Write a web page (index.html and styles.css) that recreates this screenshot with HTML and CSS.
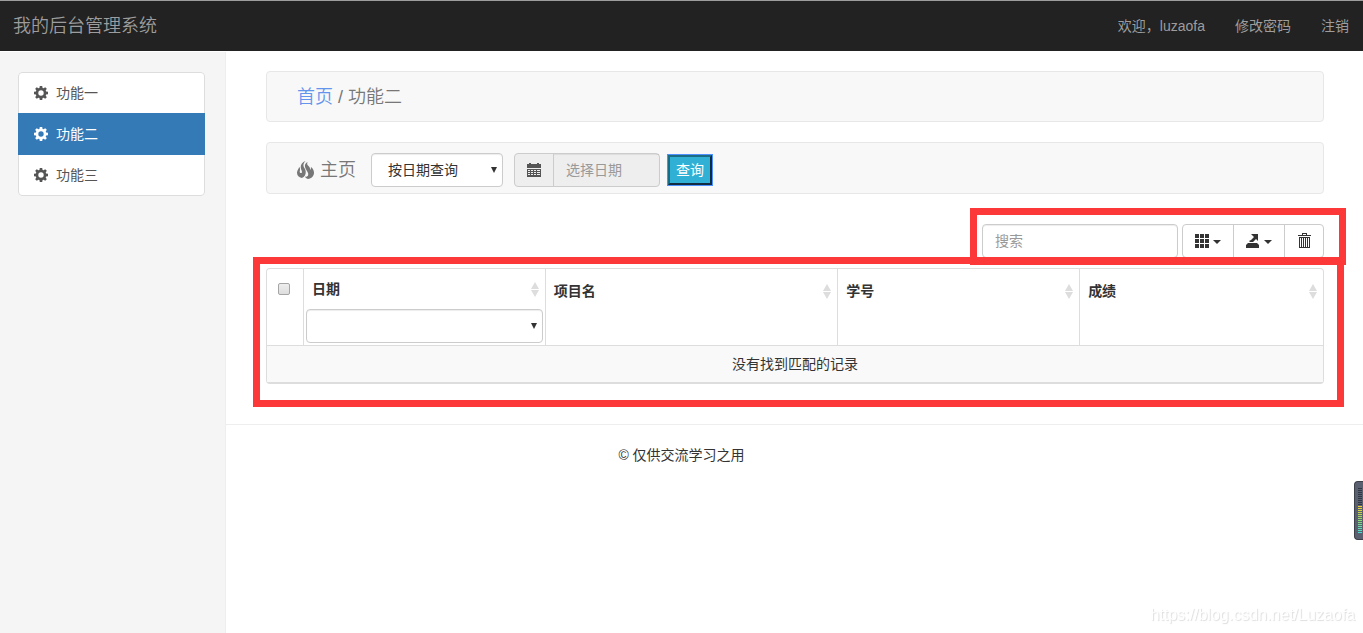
FILE: index.html
```html
<!DOCTYPE html>
<html lang="zh-CN">
<head>
<meta charset="utf-8">
<title>我的后台管理系统</title>
<link rel="stylesheet" href="styles.css">
</head>
<body>
<svg class="sprite" aria-hidden="true">
  <symbol id="cog" viewBox="0 0 14 14">
    <path fill-rule="evenodd" d="M5.8 0h2.4l.4 1.9 1 .4L11.2 1.200 12.800 2.800 11.700 4.400l.4 1 1.900.4v2.400l-1.900.4-.4 1 1.100 1.600-1.600 1.600-1.600-1.100-1 .4L8.200 14H5.800l-.4-1.900-1-.4-1.600 1.100-1.600-1.600 1.100-1.600-.4-1L0 8.200V5.800l1.900-.4.4-1L1.200 2.800 2.800 1.200l1.600 1.100 1-.4zM7 4.300a2.700 2.700 0 1 0 0 5.400 2.700 2.700 0 0 0 0-5.400z"/>
  </symbol>
  <symbol id="sorter" viewBox="0 0 8 15">
    <path d="M4 0l4 7H0zM0 8h8l-4 7z"/>
  </symbol>
</svg>
<header class="navbar">
  <a class="brand" href="#">我的后台管理系统</a>
  <nav class="nav-links">
    <a href="#">欢迎，luzaofa</a>
    <a href="#">修改密码</a>
    <a href="#">注销</a>
  </nav>
</header>
<div class="layout">
  <aside class="sidebar">
    <nav class="menu">
      <a class="menu-item" href="#"><svg class="icon"><use href="#cog"/></svg>功能一</a>
      <a class="menu-item active" href="#"><svg class="icon"><use href="#cog"/></svg>功能二</a>
      <a class="menu-item" href="#"><svg class="icon"><use href="#cog"/></svg>功能三</a>
    </nav>
  </aside>
  <div class="page">
    <main class="content">
      <div class="panel breadcrumb"><a href="#">首页</a>&nbsp;/&nbsp;<span>功能二</span></div>
      <form class="panel filters">
        <h1 class="filters-title">
          <svg class="icon-flame" viewBox="0 0 17 18" aria-hidden="true">
            <path d="M8.500 0C6.800 1.600 6.200 3.200 6.500 5c.3 1.700 1.900 2.700 2.200 5.200.3 3-1 5.800-3.900 6.800C2 16.600 0 14.600 0 11.800 0 9.400 1.600 8 2.200 6c.7.8 1 1.700.8 2.900-.2 1.200-.5 2 .1 2.800.5.600 1.500.5 1.800-.3.400-1.200-.9-2.400-1.100-4.600C3.500 3.600 5.500 1 8.500 0z"/>
            <path d="M10.600 1c-.8 1.400-.5 2.700.7 3.700 1.400 1.200 2 2.500 1.800 4.200.8-.8 1-1.800.8-3 1.900 1.200 3.100 3.300 3.100 5.800 0 3.300-2.500 5.900-6 6.300-1.700-.3-2.700-1.200-3-2.400 1.400.3 2.600-.2 3.100-1.400.8-2-1-3.500-1.900-5.400C8.100 6.500 7.700 5.300 8 4c.4-1.500 1.300-2.400 2.600-3z"/>
          </svg>主页
        </h1>
        <span class="select-box query-type">
          <select class="control" aria-label="查询方式"><option>按日期查询</option></select>
        </span>
        <div class="date-group">
          <label class="addon" for="date" aria-label="日期">
            <svg class="icon" viewBox="0 0 14 14"><path fill-rule="evenodd" d="M0 1h2V0h2v1h6V0h2v1h2v4H0zM0 6h14v8H0zM1 7v1h2V7zm3 0v1h2V7zm3 0v1h2V7zm3 0v1h3V7zM1 9v1h2V9zm3 0v1h2V9zm3 0v1h2V9zm3 0v1h3V9zM1 11v1h2v-1zm3 0v1h2v-1zm3 0v1h2v-1zm3 0v1h3v-1z"/></svg>
          </label>
          <input class="date-input" id="date" type="text" placeholder="选择日期" readonly>
        </div>
        <button class="query-button" type="button">查询</button>
      </form>
      <div class="toolbar">
        <div class="tools">
          <input class="control search" type="text" placeholder="搜索" aria-label="搜索">
          <div class="button-group">
            <button type="button" aria-label="列">
              <svg class="icon" viewBox="0 0 14 14"><path d="M0 0h4v4H0zm5 0h4v4H5zm5 0h4v4h-4zM0 5h4v4H0zm5 0h4v4H5zm5 0h4v4h-4zM0 10h4v4H0zm5 0h4v4H5zm5 0h4v4h-4z"/></svg>
              <span class="caret"></span>
            </button>
            <button type="button" aria-label="导出">
              <svg class="icon" viewBox="0 0 14 14"><path d="M5 0h7v7L10 5 7 8H4L3 7l2-1 3-3zM2 9h9l2 2H0zM0 11h13v3H0z"/></svg>
              <span class="caret"></span>
            </button>
            <button type="button" aria-label="删除">
              <svg class="icon-trash" viewBox="0 0 13 16"><path fill-rule="evenodd" d="M4 0h5v2h4v1H0V2h4zm1 1v1h3V1zM1 4h11v11H1zm1 1v9h1V5zm2 0v9h1V5zm2 0v9h1V5zm2 0v9h1V5zm2 0v9h1V5z"/></svg>
            </button>
          </div>
          <div class="highlight"></div>
        </div>
      </div>
      <div class="table-box">
        <table class="records">
          <colgroup><col class="col-check"><col class="col-date"><col class="col-project"><col class="col-number"><col class="col-score"></colgroup>
          <thead>
            <tr>
              <th class="check-cell"><input class="check" type="checkbox" aria-label="全选"></th>
              <th>
                <div class="th-label th-filtered">日期<svg class="sorter"><use href="#sorter"/></svg></div>
                <div class="select-box th-filter"><select class="control" aria-label="日期筛选"><option></option></select></div>
              </th>
              <th><div class="th-label">项目名<svg class="sorter"><use href="#sorter"/></svg></div></th>
              <th><div class="th-label">学号<svg class="sorter"><use href="#sorter"/></svg></div></th>
              <th><div class="th-label">成绩<svg class="sorter"><use href="#sorter"/></svg></div></th>
            </tr>
          </thead>
          <tbody><tr><td colspan="5">没有找到匹配的记录</td></tr></tbody>
        </table>
        <div class="highlight"></div>
      </div>
    </main>
    <footer class="footer">© 仅供交流学习之用</footer>
  </div>
</div>
<div class="meter" aria-hidden="true"><div class="meter-bars"></div></div>
<div class="watermark">https://blog.csdn.net/Luzaofa</div>
</body>
</html>
```
FILE: styles.css
```css
* { box-sizing: border-box; }

body {
  margin: 0;
  min-height: 100vh;
  display: flex;
  flex-direction: column;
  background: #fff;
  color: #333;
  font: 14px/20px "Liberation Sans", "Noto Sans CJK SC", sans-serif;
}

a { text-decoration: none; }
input, select, button { margin: 0; font: inherit; color: inherit; }
svg { fill: currentColor; flex: none; }
.sprite { position: absolute; width: 0; height: 0; }
.icon { width: 14px; height: 14px; }

.navbar {
  display: flex;
  justify-content: space-between;
  align-items: center;
  height: 51px;
  padding: 0 14px 0 13px;
  border-top: 1px solid #9d9d9d;
  background: #222;
}
.navbar a { color: #9d9d9d; }
.navbar .brand { font-size: 18px; font-weight: 350; }
.nav-links { display: flex; gap: 30px; }

.layout { flex: 1; display: flex; margin-top: 1px; }
.sidebar {
  flex: none;
  width: 226px;
  padding: 20px 20px 20px 18px;
  border-right: 1px solid #eee;
  background: #f5f5f5;
}
.menu { border-radius: 4px; background: #fff; }
.menu-item {
  position: relative;
  display: flex;
  align-items: center;
  gap: 8px;
  height: 42px;
  margin-bottom: -1px;
  padding: 0 15px;
  border: 1px solid #ddd;
  color: #555;
}
.menu-item:first-child { border-radius: 4px 4px 0 0; }
.menu-item:last-child { margin-bottom: 0; border-radius: 0 0 4px 4px; }
.menu-item.active { z-index: 1; border-color: #337ab7; background: #337ab7; color: #fff; }

.page { flex: 1; min-width: 0; }
.content { padding: 19px 39px 40px 40px; }
.panel {
  display: flex;
  align-items: center;
  height: 51px;
  margin-bottom: 20px;
  padding: 0 30px;
  border: 1px solid #e7e7e7;
  border-radius: 4px;
  background: #f8f8f8;
  color: #777;
  font-size: 18px;
}
.breadcrumb a { color: #6495ed; }
.breadcrumb { font-weight: 350; }
.filters { height: 52px; margin-bottom: 30px; padding-top: 4px; font-size: 14px; }
.filters-title {
  display: flex;
  align-items: center;
  gap: 6px;
  margin: 0 15px 0 0;
  font-size: 18px;
  font-weight: 350;
}
.icon-flame { width: 17px; height: 18px; }

.control {
  display: block;
  width: 100%;
  height: 34px;
  padding: 6px 12px;
  border: 1px solid #ccc;
  border-radius: 4px;
  background: #fff;
  color: #333;
  box-shadow: inset 0 1px 1px rgba(0, 0, 0, .075);
  appearance: none;
}
select.control { padding-left: 16px; }
::placeholder { color: #999; opacity: 1; }
.select-box { position: relative; }
.select-box::after {
  content: "";
  position: absolute;
  top: 14px;
  right: 6px;
  border: solid transparent;
  border-width: 6px 3px 0;
  border-top-color: #333;
  pointer-events: none;
}
.query-type { width: 132px; margin-right: 11px; }
.date-group {
  display: flex;
  width: 146px;
  height: 34px;
  border: 1px solid #ccc;
  border-radius: 4px;
  background: #eee;
}
.addon {
  display: flex;
  align-items: center;
  justify-content: center;
  width: 39px;
  border-right: 1px solid #ccc;
  color: #555;
}
.date-input {
  flex: 1;
  min-width: 0;
  padding: 0 12px;
  border: 0;
  background: none;
  box-shadow: inset 0 1px 1px rgba(0, 0, 0, .075);
}
.query-button {
  width: 44px;
  height: 30px;
  margin-left: 8px;
  padding: 0;
  border: 2px solid #1b6d85;
  border-right-color: #122b40;
  border-bottom-color: #122b40;
  outline: 1px solid #4d90fe;
  background: #31b0d5;
  color: #fff;
}

.toolbar { display: flex; justify-content: flex-end; margin-bottom: 10px; }
.tools { position: relative; display: flex; gap: 4px; }
.search { width: 196px; }
.button-group { display: flex; height: 34px; border: 1px solid #ccc; border-radius: 4px; }
.button-group button {
  display: flex;
  align-items: center;
  justify-content: center;
  gap: 4px;
  width: 51px;
  padding: 0;
  border: 0;
  border-right: 1px solid #ccc;
  background: none;
}
.button-group button:last-child { width: 38px; border-right: 0; }
.icon-trash { width: 13px; height: 16px; }
.caret { border: solid transparent; border-width: 4px 4px 0; border-top-color: #333; margin-top: 2px; }

.highlight { position: absolute; border: 7px solid #fc3838; pointer-events: none; }
.tools .highlight { inset: -16px -22px -7px -12px; }
.table-box .highlight { inset: -12px -21px -25px -14px; }

.table-box { position: relative; border: 1px solid #ddd; border-bottom-width: 2px; border-radius: 4px; }
.records { width: 100%; border-collapse: separate; border-spacing: 0; table-layout: fixed; }
.col-check { width: 37px; }
.col-date { width: 22.9%; }
.col-project { width: 27.7%; }
.col-number { width: 22.9%; }
.records th {
  padding: 0;
  border-right: 1px solid #ddd;
  border-bottom: 1px solid #ddd;
  text-align: left;
  vertical-align: top;
}
.records th:last-child { border-right: 0; }
.records td { height: 36px; padding: 8px; background: #f9f9f9; text-align: center; }
.records .check-cell { padding: 14px 11px; }
.check {
  display: block;
  width: 12px;
  height: 12px;
  border: 1px solid #a5a5a5;
  border-radius: 2px;
  background: linear-gradient(#eee, #ddd);
  appearance: none;
}
.th-label { display: flex; justify-content: space-between; align-items: center; height: 44px; padding: 0 6px 0 8px; }
.th-filtered { height: 40px; }
.sorter { width: 8px; height: 15px; color: #ddd; }
.th-filter { margin: 0 2px 2px; }

.footer { padding: 20px 226px 20px 0; border-top: 1px solid #eee; text-align: center; }

.meter {
  position: fixed;
  top: 481px;
  right: 0;
  width: 9px;
  height: 59px;
  padding: 6px 0 6px 3px;
  border: 1px solid #3c404a;
  border-right: 0;
  border-radius: 4px 0 0 4px;
  background: #5a6070;
}
.meter-bars {
  width: 4px;
  height: 45px;
  background:
    repeating-linear-gradient(transparent 0 1px, #5a6070 1px 2px),
    linear-gradient(#333743 0 18px, #f5d02c 18px, #8ee070 32px, #45e0d8);
}
.watermark {
  position: fixed;
  right: 8px;
  bottom: 8px;
  color: #fff;
  font: 16px/20px "Liberation Sans", sans-serif;
  text-shadow: 1px 1px 1px #ddd;
}
```
